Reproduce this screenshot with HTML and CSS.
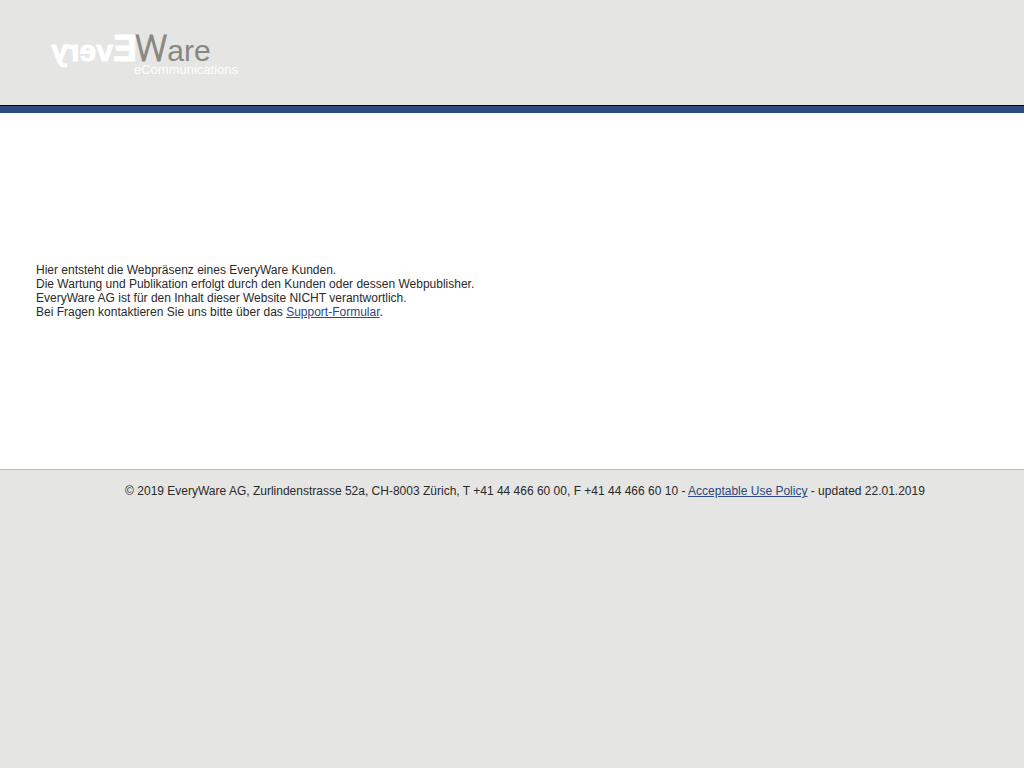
FILE: index.html
```html
<!DOCTYPE html>
<html lang="de">
<head>
    <meta charset="UTF-8">
    <meta name="viewport" content="width=device-width, initial-scale=1.0">
    <title>EveryWare AG</title>
    <link rel="stylesheet" href="styles.css">
</head>
<body>
    <header class="header">
        <svg class="logo" width="190" height="46" viewBox="0 0 190 46" role="img" aria-label="EveryWare eCommunications">
            <!-- "Every" is mirrored -->
            <g transform="translate(87 0) scale(-1 1)">
                <text class="logo-every" x="0" y="31"><tspan class="logo-cap">E</tspan>very</text>
            </g>
            <text class="logo-ware" x="85" y="31"><tspan class="logo-cap">W</tspan>are</text>
            <text class="logo-sub" x="84" y="44">eCommunications</text>
        </svg>
    </header>
    <div class="bar"></div>

    <main class="content">
        <p>
            Hier entsteht die Webpräsenz eines EveryWare Kunden.<br>
            Die Wartung und Publikation erfolgt durch den Kunden oder dessen Webpublisher.<br>
            EveryWare AG ist für den Inhalt dieser Website NICHT verantwortlich.<br>
            Bei Fragen kontaktieren Sie uns bitte über das <a href="#">Support-Formular</a>.
        </p>
    </main>

    <footer class="footer">
        © 2019 EveryWare AG, Zurlindenstrasse 52a, CH-8003 Zürich, T +41 44 466 60 00, F +41 44 466 60 10 - <a href="#">Acceptable Use Policy</a> - updated 22.01.2019
    </footer>
</body>
</html>
```
FILE: styles.css
```css
body{
    margin: 0;
    background-color: #e5e5e3;
    color: #2a2a2a;
    font-family: "Liberation Sans", Arial, Helvetica, sans-serif;
    font-size: 12px;
    line-height: 14px;
}
a{
    color: #2e4880;
}
.header{
    padding: 30px 50px 29px;
}
.logo{
    display: block;
    overflow: visible;
}
.logo-every{
    fill: #fff;
    stroke: #fff;
    stroke-width: 1px;
    font-size: 30px;
    font-weight: bold;
}
.logo-ware{
    fill: #898781;
    font-size: 30px;
}
.logo-cap{
    font-size: 36px;
}
.logo-ware .logo-cap{
    font-family: Roboto, "Liberation Sans", sans-serif;
    font-weight: 300;
    stroke: #898781;
    stroke-width: 1px;
}
.logo-sub{
    fill: #fff;
    font-size: 13px;
}
.bar{
    height: 7px;
    background-color: #2e4880;
    border-top: 1px solid #000;
}
.content{
    display: flex;
    align-items: center;
    min-height: 356px;
    padding: 0 36px;
    background-color: #fff;
    border-bottom: 1px solid #bbb;
}
.content p{
    margin: 0;
}
.footer{
    padding: 14px 0 14px 26px;
    text-align: center;
}
```
